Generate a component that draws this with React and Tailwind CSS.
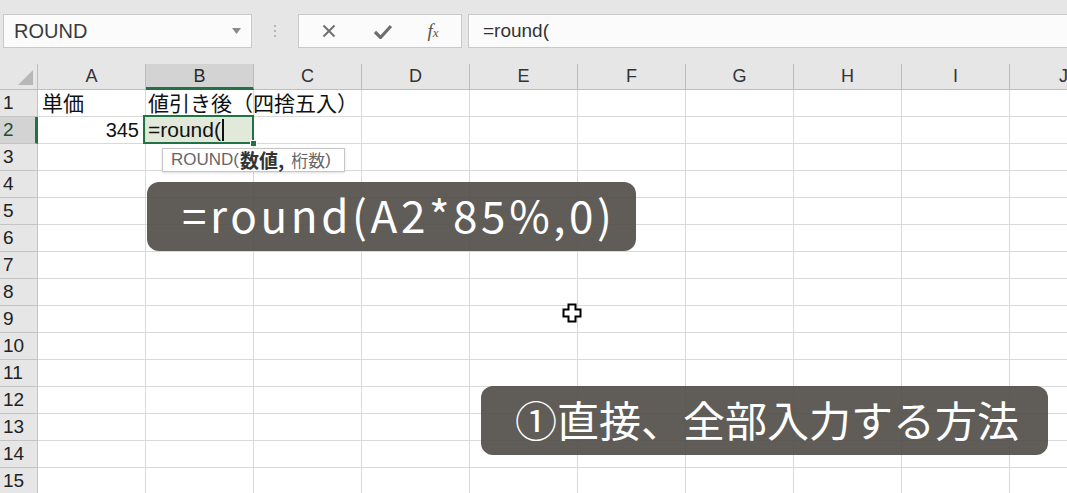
import React from "react";

const COLS = ["A", "B", "C", "D", "E", "F", "G", "H", "I", "J"];
const ROWS = Array.from({ length: 15 }, (_, i) => i + 1);

const ui = { fontFamily: '"Liberation Sans", "Noto Sans CJK JP", sans-serif' };
const jp = { fontFamily: '"Noto Sans CJK JP", "Liberation Sans", sans-serif' };

function Toolbar() {
    return (
        <div className="flex h-[34px] items-stretch">
            {/* name box */}
            <div className="ml-[3px] flex w-[249px] items-center justify-between border border-[#c9c9c9] bg-[#fbfbfb] pl-[10px] pr-[10px]">
                <span className="text-[20px] text-[#3a3a3a]">ROUND</span>
                <svg width="9" height="6" viewBox="0 0 9 6">
                    <path d="M0 0 L9 0 L4.5 6 Z" fill="#8a8a8a" />
                </svg>
            </div>

            {/* grip dots */}
            <div className="flex w-[46px] flex-col items-center justify-center gap-[3px]">
                <span className="h-[2px] w-[2px] bg-[#b5b5b5]" />
                <span className="h-[2px] w-[2px] bg-[#b5b5b5]" />
                <span className="h-[2px] w-[2px] bg-[#b5b5b5]" />
            </div>

            {/* cancel / enter / fx */}
            <div className="flex w-[164px] items-center border border-[#c9c9c9] bg-[#fbfbfb]">
                <div className="flex w-[58px] justify-center pl-[2px]">
                    <svg width="14" height="14" viewBox="0 0 14 14">
                        <path d="M1.5 1.5 L12.5 12.5 M12.5 1.5 L1.5 12.5" stroke="#707070" strokeWidth="2" />
                    </svg>
                </div>
                <div className="flex w-[52px] justify-center">
                    <svg width="18" height="15" viewBox="0 0 18 15">
                        <path d="M1 8 L6.5 13.5 L17 2" stroke="#6e6e6e" strokeWidth="3.2" fill="none" />
                    </svg>
                </div>
                <div className="flex flex-1 justify-center pr-[4px]">
                    <span className="text-[19px] italic text-[#555]" style={{ fontFamily: '"Liberation Serif", serif' }}>
                        f<span className="text-[13px]">x</span>
                    </span>
                </div>
            </div>

            {/* formula input */}
            <div className="ml-[6px] flex flex-1 items-center border border-r-0 border-[#c9c9c9] bg-[#fbfbfb] pl-[14px]">
                <span className="text-[19px] text-[#333]">=round(</span>
            </div>
        </div>
    );
}

function HeaderRow() {
    return (
        <div className="flex h-[26px] bg-[#e6e6e6]">
            <div className="relative w-[38px] shrink-0 border-r border-b border-[#bdbdbd]">
                <svg className="absolute left-[18px] top-[6px]" width="15" height="15" viewBox="0 0 15 15">
                    <path d="M15 0 L15 15 L0 15 Z" fill="#b8b8b8" />
                </svg>
            </div>
            {COLS.map((c) => (
                <div
                    key={c}
                    className={
                        c === "B"
                            ? "flex w-[108px] shrink-0 items-center justify-center border-r border-[#bdbdbd] border-b-[3px] border-b-[#217346] bg-[#d3d3d3] pt-[2px] text-[18px] text-[#2b2b2b]"
                            : "flex w-[108px] shrink-0 items-center justify-center border-r border-b border-[#bdbdbd] text-[18px] text-[#333]"
                    }
                >
                    {c}
                </div>
            ))}
        </div>
    );
}

function Cell({ col, row }) {
    if (row === 1 && col === "A") {
        return <span className="pl-[4px] text-[21px] text-[#111]" style={jp}>単価</span>;
    }
    if (row === 1 && col === "B") {
        return (
            <span className="whitespace-nowrap pl-[2px] text-[21px] text-[#111]" style={jp}>
                値引き後（四捨五入）
            </span>
        );
    }
    if (row === 2 && col === "A") {
        return <span className="ml-auto pr-[6px] text-[20px] text-[#111]">345</span>;
    }
    if (row === 2 && col === "B") {
        return (
            <span className="flex items-center pl-[2px] text-[21px] text-[#111]">
                =round(
                <span className="ml-[1px] h-[22px] w-[2px] bg-[#111]" />
            </span>
        );
    }
    return null;
}

function GridRow({ row }) {
    const active = row === 2;
    return (
        <div className="flex h-[27px]">
            <div
                className={
                    active
                        ? "flex w-[38px] shrink-0 items-center border-b border-[#c4c4c4] border-r-[3px] border-r-[#217346] bg-[#d3d3d3] pl-[3px] text-[19px] text-[#1d4d33]"
                        : "flex w-[38px] shrink-0 items-center border-r border-b border-[#c4c4c4] bg-[#e6e6e6] pl-[3px] text-[19px] text-[#222]"
                }
            >
                {row}
            </div>
            {COLS.map((c) => {
                const selected = active && c === "B";
                return (
                    <div
                        key={c}
                        className={
                            "relative flex w-[108px] shrink-0 items-center border-r border-b border-[#d9d9d9] " +
                            (selected ? "z-10 bg-[#e2e8da]" : "")
                        }
                    >
                        <Cell col={c} row={row} />
                        {selected && (
                            <>
                                <div className="pointer-events-none absolute -left-[3px] -top-[2px] -right-[1px] -bottom-[1px] border-[2px] border-[#217346]" />
                                <div className="absolute -bottom-[4px] -right-[4px] h-[7px] w-[7px] border border-white bg-[#217346]" />
                            </>
                        )}
                    </div>
                );
            })}
        </div>
    );
}

export default function App() {
    return (
        <div className="relative h-[493px] w-[1067px] overflow-hidden bg-[#e6e6e6]" style={ui}>
            <div className="h-[14px]" />
            <Toolbar />
            <div className="h-[16px]" />

            <div className="overflow-hidden bg-white">
                <HeaderRow />
                {ROWS.map((r) => (
                    <GridRow key={r} row={r} />
                ))}
            </div>

            {/* function hint */}
            <div className="absolute left-[162px] top-[148px] z-20 flex h-[24px] w-[183px] items-center whitespace-nowrap border border-[#c6c6c6] bg-white pl-[8px] text-[17px] text-[#666] shadow-sm">
                ROUND(<span className="ml-[1px] text-[19px] font-bold text-[#333]" style={jp}>数値,</span>
                <span className="ml-[7px] text-[17px]" style={jp}>桁数</span>)
            </div>

            {/* captions */}
            <div className="absolute left-[147px] top-[182px] z-30 flex h-[69px] w-[489px] items-center rounded-[12px] bg-[#4f4b47]/90 pb-[6px] pl-[35px]">
                <span className="whitespace-nowrap text-[44px] leading-none tracking-[3.6px] text-white" style={jp}>
                    =round(A2*85%,0)
                </span>
            </div>

            <div className="absolute left-[481px] top-[386px] z-30 flex h-[69px] w-[567px] items-center rounded-[12px] bg-[#4f4b47]/90 pb-[4px] pl-[34px]">
                <span className="whitespace-nowrap text-[42px] leading-none text-white" style={jp}>
                    ①直接、全部入力する方法
                </span>
            </div>

            {/* mouse cursor */}
            <svg className="absolute left-[562px] top-[303px] z-30" width="20" height="20" viewBox="0 0 20 20">
                <path
                    d="M6.5 1.5 H13.5 V6.5 H18.5 V13.5 H13.5 V18.5 H6.5 V13.5 H1.5 V6.5 H6.5 Z"
                    fill="#fff"
                    stroke="#000"
                    strokeWidth="2"
                />
            </svg>
        </div>
    );
}
